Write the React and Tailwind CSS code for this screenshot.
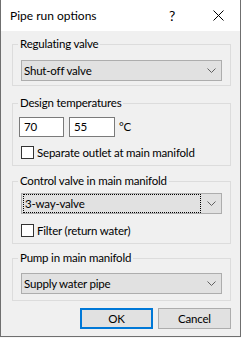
import React from "react";

const font = { fontFamily: 'Lato, "Noto Sans", sans-serif' };

const Chevron = () => (
  <svg width="9" height="5" viewBox="0 0 9 5" className="shrink-0">
    <path d="M0.5 0.5 L4.5 4.5 L8.5 0.5" fill="none" stroke="#606060" strokeWidth="1" />
  </svg>
);

const Combo = ({ value, focused, className }) => (
  <div className={"flex items-center h-[21px] bg-[#e1e1e1] border border-[#adadad] pr-[5px] " + className}>
    {focused ? (
      <div className="flex-1 h-[19px] ml-[1px] mr-[6px] border border-dotted border-black flex items-center pl-[1px] leading-[15px]">
        {value}
      </div>
    ) : (
      <div className="flex-1 pl-[2px] leading-[15px]">{value}</div>
    )}
    <Chevron />
  </div>
);

const Check = ({ label, className }) => (
  <div className={"flex items-center h-[13px] " + className}>
    <div className="w-[13px] h-[13px] bg-white border border-[#333333] shrink-0" />
    <span className="ml-[3px] leading-[13px] whitespace-nowrap">{label}</span>
  </div>
);

const Group = ({ title, className, children }) => (
  <fieldset className={"ml-[11px] w-[219px] border border-[#dcdcdc] " + className}>
    <legend className="ml-[5px] px-[2px] leading-[16px] h-[16px]">{title}</legend>
    <div className="px-[8px]">{children}</div>
  </fieldset>
);

export default function App() {
  return (
    <div className="w-[241px] h-[338px] bg-[#f6f6f6] text-[11.5px] tracking-[-0.2px] text-black" style={font}>
      <div className="w-[241px] h-[337px] border-x border-b border-[#6f6f6f] bg-[#f0f0f0] flex flex-col">
        <div className="h-[31px] bg-white flex items-center shrink-0">
          <span className="ml-[9px] text-[12px] tracking-normal leading-[16px]">Pipe run options</span>
          <span className="ml-auto mr-[38px] text-[14px] leading-[16px]">?</span>
          <svg width="11" height="11" viewBox="0 0 11 11" className="mr-[16px]">
            <path d="M0.5 0.5 L10.5 10.5 M10.5 0.5 L0.5 10.5" stroke="#000" strokeWidth="1" />
          </svg>
        </div>

        <Group title="Regulating valve" className="mt-[5px] pb-[4px]">
          <Combo value="Shut-off valve" className="mt-[8px]" />
        </Group>

        <Group title="Design temperatures" className="mt-[9px] pb-[6px]">
          <div className="flex items-center mt-[6px] -ml-[2px]">
            <div className="w-[45px] h-[20px] bg-white border border-[#7a7a7a] pl-[4px] leading-[18px]">70</div>
            <div className="w-[46px] h-[20px] ml-[5px] bg-white border border-[#7a7a7a] pl-[4px] leading-[18px]">55</div>
            <span className="ml-[4px] leading-[18px]">°C</span>
          </div>
          <Check label="Separate outlet at main manifold" className="mt-[9px]" />
        </Group>

        <Group title="Control valve in main manifold" className="mt-[7px] pb-[6px]">
          <Combo value="3-way-valve" focused className="mt-[4px]" />
          <Check label="Filter (return water)" className="mt-[10px]" />
        </Group>

        <Group title="Pump in main manifold" className="mt-[6px] pb-[6px]">
          <Combo value="Supply water pipe" className="mt-[7px]" />
        </Group>

        <div className="flex justify-end gap-[5px] mt-[7px] ml-[11px] w-[219px]">
          <button className="w-[73px] h-[21px] bg-[#e1e1e1] border-2 border-[#0078d7] leading-[15px]">OK</button>
          <button className="w-[73px] h-[21px] bg-[#e1e1e1] border border-[#adadad] leading-[15px]">Cancel</button>
        </div>
      </div>
    </div>
  );
}
